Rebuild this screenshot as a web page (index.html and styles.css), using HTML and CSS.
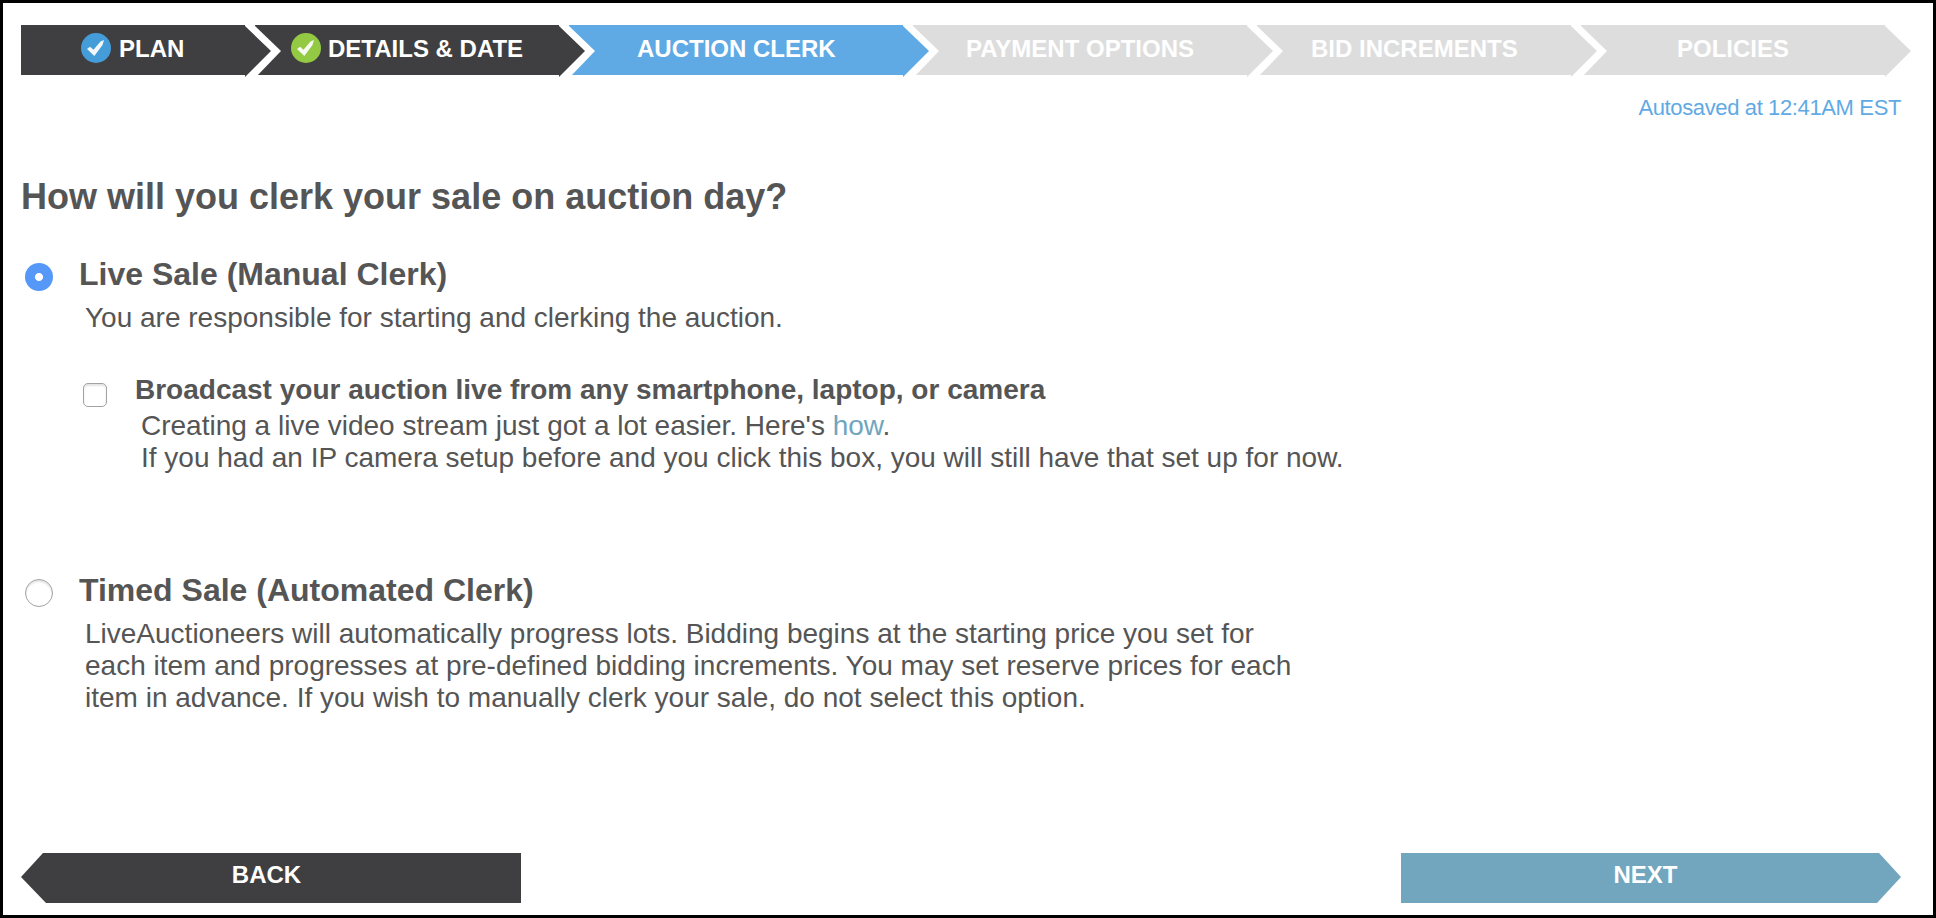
FILE: index.html
```html
<!DOCTYPE html>
<html lang="en">
<head>
<meta charset="utf-8">
<title>Auction Clerk</title>
<link rel="stylesheet" href="styles.css">
</head>
<body>
<main class="wizard">
  <ol class="steps">
    <li class="step step-plan done">
      <svg class="check" viewBox="0 0 30 30"><circle cx="15" cy="15" r="15" fill="#449dd8"/><path d="M6 16 L9 13.8 L12.5 16.8 L19.5 8.5 L23 7 L21.5 12 L13.3 23 Z" fill="#f4f8fb"/></svg>
      <span>PLAN</span>
    </li>
    <li class="step step-details done">
      <svg class="check" viewBox="0 0 30 30"><circle cx="15" cy="15" r="15" fill="#94ca43"/><path d="M6 16 L9 13.8 L12.5 16.8 L19.5 8.5 L23 7 L21.5 12 L13.3 23 Z" fill="#f6faf0"/></svg>
      <span>DETAILS &amp; DATE</span>
    </li>
    <li class="step step-clerk active"><span>AUCTION CLERK</span></li>
    <li class="step step-payment"><span>PAYMENT OPTIONS</span></li>
    <li class="step step-bids"><span>BID INCREMENTS</span></li>
    <li class="step step-policies"><span>POLICIES</span></li>
  </ol>
  <p class="autosaved">Autosaved at 12:41AM EST</p>
  <h1 class="question">How will you clerk your sale on auction day?</h1>

  <section class="option">
    <input class="radio" type="radio" name="clerk" id="live" checked>
    <div class="option-body">
      <label class="option-title" for="live">Live Sale (Manual Clerk)</label>
      <p class="option-text">You are responsible for starting and clerking the auction.</p>
      <div class="broadcast">
        <input class="checkbox" type="checkbox" id="broadcast">
        <div class="broadcast-body">
          <label class="broadcast-title" for="broadcast">Broadcast your auction live from any smartphone, laptop, or camera</label>
          <p class="broadcast-text">Creating a live video stream just got a lot easier. Here's <a class="link" href="#">how</a>.<br>If you had an IP camera setup before and you click this box, you will still have that set up for now.</p>
        </div>
      </div>
    </div>
  </section>

  <section class="option option-timed">
    <input class="radio" type="radio" name="clerk" id="timed">
    <div class="option-body">
      <label class="option-title" for="timed">Timed Sale (Automated Clerk)</label>
      <p class="option-text">LiveAuctioneers will automatically progress lots. Bidding begins at the starting price you set for<br>each item and progresses at pre-defined bidding increments. You may set reserve prices for each<br>item in advance. If you wish to manually clerk your sale, do not select this option.</p>
    </div>
  </section>

  <footer class="actions">
    <button class="btn btn-back">BACK</button>
    <button class="btn btn-next">NEXT</button>
  </footer>
</main>
</body>
</html>
```

FILE: styles.css
```css
* { box-sizing: border-box; }

body {
  margin: 0;
  background: #fff;
  color: #555;
  font-family: "Liberation Sans", Arial, sans-serif;
}

.wizard {
  display: flex;
  flex-direction: column;
  width: 1936px;
  height: 918px;
  padding: 22px 32px 12px 18px;
  border: 3px solid #000;
  overflow: hidden;
}

p, h1, ol { margin: 0; padding: 0; }

.steps {
  display: flex;
  gap: 10px;
  list-style: none;
}

.step {
  --fill: #ddd;
  position: relative;
  display: flex;
  flex: none;
  height: 50px;
  background: var(--fill);
  color: #fff;
  font-size: 24px;
  font-weight: bold;
  line-height: 48px;
  white-space: nowrap;
}

.step.done { --fill: #3f3f41; }
.step.active { --fill: #5faae4; }

/* arrow head on the right, white notch on the left */
.step::after,
.step + .step::before {
  content: "";
  position: absolute;
  top: 0;
  width: 26px;
  height: 53px;
}
.step::after {
  left: 100%;
  z-index: 2;
  background: var(--fill);
  clip-path: polygon(0 1px, 100% 26px, 0 52px);
}
.step + .step::before {
  left: 0;
  z-index: 1;
  background: #fff;
  clip-path: polygon(0 1px, 100% 26px, 0 100%);
}

.step-plan { width: 224px; padding-left: 60px; }
.step-details { width: 304px; padding-left: 36px; }
.step-clerk { width: 334px; padding-left: 68px; }
.step-payment { width: 334px; padding-left: 53px; }
.step-bids { width: 314px; padding-left: 54px; }
.step-policies { width: 304px; padding-left: 96px; }

.check {
  flex: none;
  width: 30px;
  height: 30px;
  margin: 8px 7px 0 0;
}
.step-plan .check { margin-right: 8px; }

.autosaved {
  margin-top: 20px;
  color: #5faae4;
  font-size: 22px;
  letter-spacing: -0.37px;
  line-height: 26px;
  text-align: right;
}

.question {
  margin-top: 55px;
  font-size: 36px;
  line-height: 42px;
}

.option {
  display: flex;
  gap: 25px;
  margin-top: 38px;
  padding-left: 4px;
}
.option-timed { margin-top: 98px; }

.radio,
.checkbox {
  flex: none;
  appearance: none;
  margin: 0;
  border: 1px solid #a2a2a2;
  background: #fff;
  box-shadow: inset 0 2px 2px #e4e4e4;
}
.radio {
  width: 28px;
  height: 28px;
  margin-top: 7px;
  border-radius: 50%;
}
.radio:checked {
  border: 0;
  background: radial-gradient(circle, #fff 3.6px, #5598f8 4.4px);
  box-shadow: none;
}
.checkbox {
  width: 24px;
  height: 24px;
  margin-top: 9px;
  border-radius: 5px;
}

.option-title {
  display: block;
  padding-left: 1px;
  font-size: 32px;
  font-weight: bold;
  line-height: 36px;
}
.option-text {
  margin-top: 10px;
  padding-left: 7px;
  font-size: 28px;
  line-height: 32px;
  white-space: nowrap;
}

.broadcast {
  display: flex;
  gap: 28px;
  margin-top: 40px;
  padding-left: 5px;
  font-size: 28px;
  line-height: 32px;
  white-space: nowrap;
}
.broadcast-title { display: block; font-weight: bold; }
.broadcast-text { margin-top: 4px; padding-left: 6px; }

.link { color: #70a5be; text-decoration: none; }

.actions {
  display: flex;
  justify-content: space-between;
  margin-top: auto;
}
.btn {
  width: 500px;
  height: 50px;
  padding: 0 9px 6px 0;
  border: 0;
  color: #fff;
  font: bold 24px/44px "Liberation Sans", Arial, sans-serif;
}
.btn-back {
  background: #3f3f41;
  clip-path: polygon(22px 0, 100% 0, 100% 100%, 25px 100%, 0 24px);
}
.btn-next {
  padding-right: 11px;
  background: #72a5be;
  clip-path: polygon(0 0, 478px 0, 100% 24px, 476px 100%, 0 100%);
}
```
